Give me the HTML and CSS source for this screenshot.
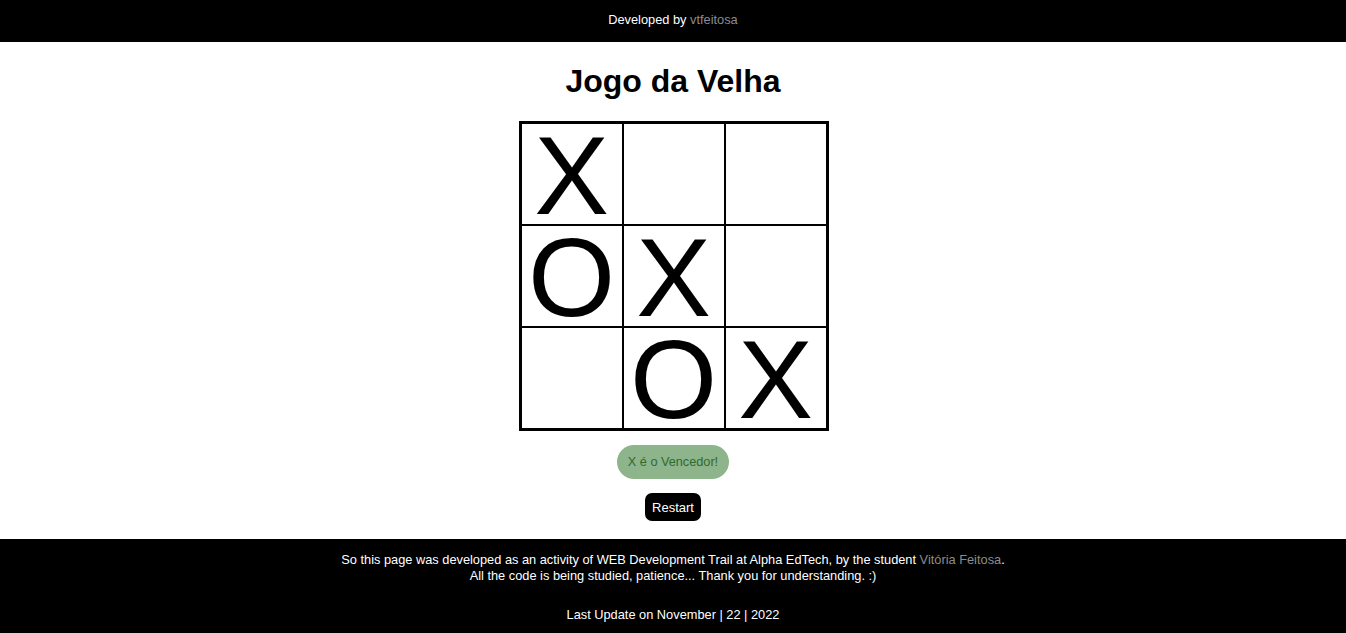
FILE: index.html
```html
<!DOCTYPE html>
<html lang="pt-BR">
<head>
<meta charset="utf-8">
<title>Jogo da Velha</title>
<link rel="stylesheet" href="styles.css">
</head>
<body>
<header class="topbar">
  <p>Developed by <a href="#" class="muted-link">vtfeitosa</a></p>
</header>
<main class="game">
  <h1 class="title">Jogo da Velha</h1>
  <div class="board">
    <div class="cell"><span class="mark">X</span></div>
    <div class="cell"></div>
    <div class="cell"></div>
    <div class="cell"><span class="mark">O</span></div>
    <div class="cell"><span class="mark">X</span></div>
    <div class="cell"></div>
    <div class="cell"></div>
    <div class="cell"><span class="mark">O</span></div>
    <div class="cell"><span class="mark">X</span></div>
  </div>
  <div class="winner">X é o Vencedor!</div>
  <button class="restart">Restart</button>
</main>
<footer class="footer">
  <p class="about">So this page was developed as an activity of WEB Development Trail at Alpha EdTech, by the student <a href="#" class="muted-link">Vitória Feitosa</a>.<br>All the code is being studied, patience... Thank you for understanding. :)</p>
  <p class="update">Last Update on November | 22 | 2022</p>
</footer>
</body>
</html>
```
FILE: styles.css
```css
* { box-sizing: border-box; }
html, body {
  margin: 0;
  padding: 0;
  background: #fff;
  font-family: "Liberation Sans", Arial, sans-serif;
  color: #000;
}
.topbar {
  background: #000;
  color: #fff;
  height: 42px;
  display: flex;
  align-items: center;
  justify-content: center;
  padding-bottom: 4px;
  font-size: 12.8px;
}
.topbar p { margin: 0; }
.muted-link {
  color: #8c8c8c;
  text-decoration: none;
}
.game {
  display: flex;
  flex-direction: column;
  align-items: center;
  padding-top: 21px;
  padding-bottom: 18px;
}
.title {
  margin: 0 0 21px;
  font-size: 32px;
  line-height: 37px;
  font-weight: bold;
}
.board {
  display: grid;
  grid-template-columns: repeat(3, 102px);
  grid-template-rows: repeat(3, 102px);
  border: 2px solid #000;
  width: 310px;
  height: 310px;
  margin-left: 1px;
}
.cell {
  border: 1px solid #000;
  display: flex;
  align-items: center;
  justify-content: center;
}
.mark {
  display: block;
  font-size: 112px;
  line-height: 80px;
  height: 80px;
  padding-top: 2px;
}
.winner {
  margin-top: 14px;
  height: 34px;
  padding: 0 11px;
  border-radius: 17px;
  background: #8db48b;
  color: #2f6a2f;
  font-size: 12.7px;
  display: flex;
  align-items: center;
}
.restart {
  margin-top: 14px;
  height: 28px;
  padding: 0 7px;
  border: none;
  border-radius: 7px;
  background: #000;
  color: #fff;
  font-family: "Liberation Sans", Arial, sans-serif;
  font-size: 13px;
}
.footer {
  background: #000;
  color: #fff;
  text-align: center;
  font-size: 12.8px;
  line-height: 16px;
  padding: 13px 0 12px;
}
.footer p { margin: 0; }
.about { margin-bottom: 23px !important; }
```
